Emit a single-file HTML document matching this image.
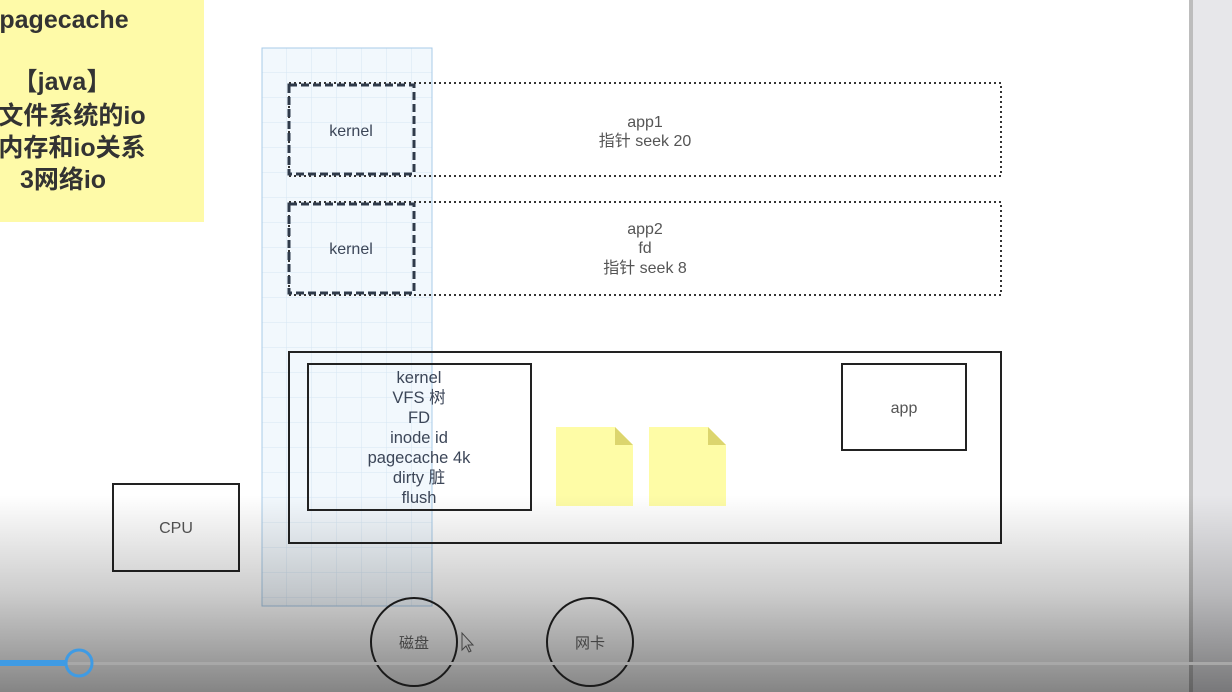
<!DOCTYPE html>
<html><head><meta charset="utf-8"><style>
html,body{margin:0;padding:0;width:1232px;height:692px;overflow:hidden;background:#fff}
svg{display:block}
text{font-family:"Liberation Sans","Noto Sans CJK SC",sans-serif}
</style></head><body>
<svg width="1232" height="692" viewBox="0 0 1232 692" xmlns="http://www.w3.org/2000/svg">
<defs>
<linearGradient id="sh" x1="0" y1="0" x2="0" y2="1">
<stop offset="0" stop-color="#000" stop-opacity="0"/>
<stop offset="0.5" stop-color="#000" stop-opacity="0.2"/>
<stop offset="1" stop-color="#000" stop-opacity="0.48"/>
</linearGradient>
<pattern id="grid" width="25" height="25" patternUnits="userSpaceOnUse" x="262" y="48">
<path d="M25 0V25M0 25H25" fill="none" stroke="#d6e6f4" stroke-width="1"/>
</pattern>
</defs>
<rect width="1232" height="692" fill="#fff"/>
<rect x="1190" y="0" width="42" height="692" fill="#e7e7ea"/>
<rect x="1189" y="0" width="4" height="692" fill="#bdbdbd"/>
<rect x="0" y="0" width="204" height="222" fill="#fefaa8"/>
<g font-weight="bold" fill="#333" font-size="25" text-anchor="middle">
<text x="64" y="28">pagecache</text>
<text x="62" y="90">【java】</text>
<text x="72" y="124">文件系统的io</text>
<text x="72" y="156">内存和io关系</text>
<text x="63" y="188">3网络io</text>
</g>
<rect x="262" y="48" width="170" height="558" fill="#f2f8fd"/>
<rect x="262" y="48" width="170" height="558" fill="url(#grid)"/>
<rect x="262" y="48" width="170" height="558" fill="none" stroke="#a8cbe8" stroke-width="1"/>
<rect x="289" y="83" width="712" height="93" fill="none" stroke="#333" stroke-width="2" stroke-dasharray="2,3"/>
<rect x="289" y="202" width="712" height="93" fill="none" stroke="#333" stroke-width="2" stroke-dasharray="2,3"/>
<rect x="289" y="85" width="125" height="89" fill="none" stroke="#2f3a4a" stroke-width="3" stroke-dasharray="8,4"/>
<rect x="289" y="204" width="125" height="89" fill="none" stroke="#2f3a4a" stroke-width="3" stroke-dasharray="8,4"/>
<g fill="#3c4658" font-size="16" text-anchor="middle">
<text x="351" y="136">kernel</text>
<text x="351" y="254">kernel</text>
</g>
<g fill="#555" font-size="16" text-anchor="middle">
<text x="645" y="127">app1</text>
<text x="645" y="146">指针 seek 20</text>
<text x="645" y="234">app2</text>
<text x="645" y="253">fd</text>
<text x="645" y="273">指针 seek  8</text>
</g>
<rect x="289" y="352" width="712" height="191" fill="none" stroke="#222" stroke-width="2"/>
<rect x="308" y="364" width="223" height="146" fill="none" stroke="#222" stroke-width="2"/>
<g fill="#3c4658" font-size="16.5" text-anchor="middle">
<text x="419" y="383">kernel</text>
<text x="419" y="403">VFS 树</text>
<text x="419" y="423">FD</text>
<text x="419" y="443">inode id</text>
<text x="419" y="463">pagecache 4k</text>
<text x="419" y="483">dirty  脏</text>
<text x="419" y="503">flush</text>
</g>
<rect x="842" y="364" width="124" height="86" fill="none" stroke="#222" stroke-width="2"/>
<text x="904" y="413" fill="#555" font-size="16" text-anchor="middle">app</text>
<path d="M556 427H615L633 445V506H556Z" fill="#fefca6"/>
<path d="M615 427L633 445H615Z" fill="#dcd56e"/>
<path d="M649 427H708L726 445V506H649Z" fill="#fefca6"/>
<path d="M708 427L726 445H708Z" fill="#dcd56e"/>
<rect x="113" y="484" width="126" height="87" fill="none" stroke="#222" stroke-width="2"/>
<text x="176" y="533" fill="#555" font-size="16" text-anchor="middle">CPU</text>
<rect x="0" y="495" width="1232" height="197" fill="url(#sh)"/>
<ellipse cx="414" cy="642" rx="43" ry="44" fill="none" stroke="#1a1a1a" stroke-width="2"/>
<ellipse cx="590" cy="642" rx="43" ry="44" fill="none" stroke="#1a1a1a" stroke-width="2"/>
<g fill="#444" font-size="15" text-anchor="middle">
<text x="414" y="648">磁盘</text>
<text x="590" y="648">网卡</text>
</g>
<path d="M462 633L462 650L466 646L469 652L471 651L468 645L473 645Z" fill="none" stroke="#444" stroke-width="1"/>
<rect x="0" y="662" width="1232" height="3" fill="#a8a8a8"/>
<rect x="0" y="660" width="66" height="6" fill="#3f9be4"/>
<circle cx="79" cy="663" r="13" fill="none" stroke="#3f9be4" stroke-width="3"/>
</svg>
</body></html>
